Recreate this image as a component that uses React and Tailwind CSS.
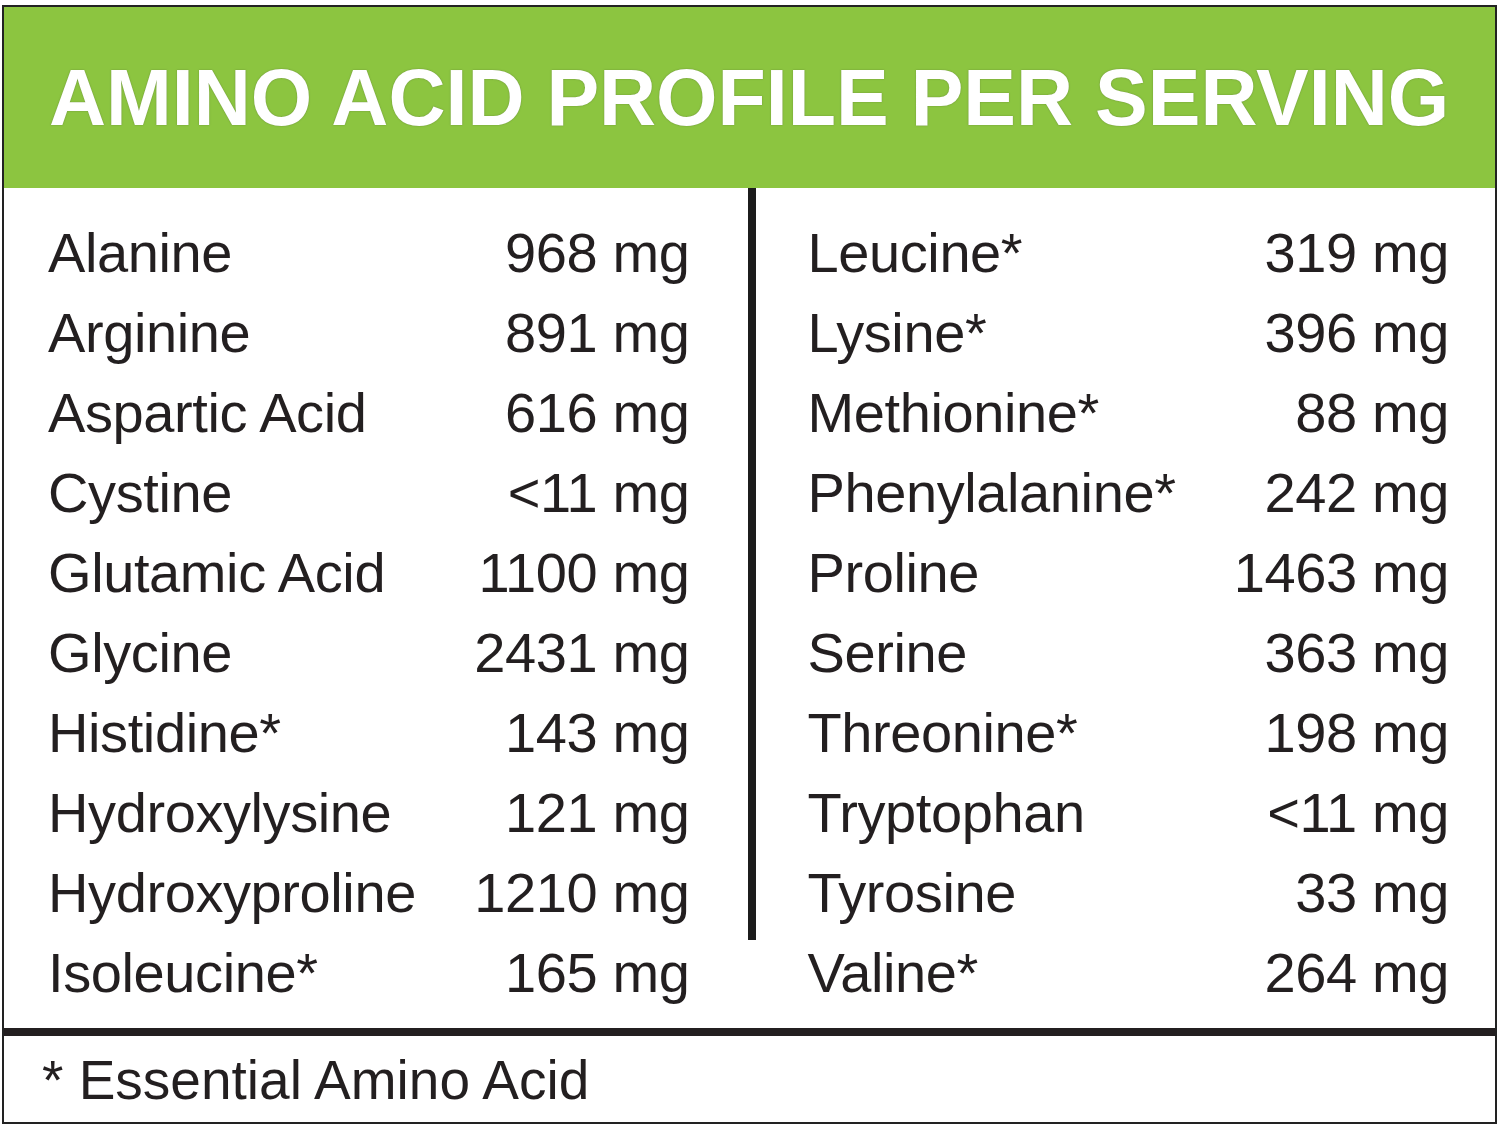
const left = [
  ['Alanine', '968 mg'],
  ['Arginine', '891 mg'],
  ['Aspartic Acid', '616 mg'],
  ['Cystine', '<11 mg'],
  ['Glutamic Acid', '1100 mg'],
  ['Glycine', '2431 mg'],
  ['Histidine*', '143 mg'],
  ['Hydroxylysine', '121 mg'],
  ['Hydroxyproline', '1210 mg'],
  ['Isoleucine*', '165 mg'],
];

const right = [
  ['Leucine*', '319 mg'],
  ['Lysine*', '396 mg'],
  ['Methionine*', '88 mg'],
  ['Phenylalanine*', '242 mg'],
  ['Proline', '1463 mg'],
  ['Serine', '363 mg'],
  ['Threonine*', '198 mg'],
  ['Tryptophan', '<11 mg'],
  ['Tyrosine', '33 mg'],
  ['Valine*', '264 mg'],
];

function Column({ rows, className }) {
  return (
    <div className={`flex flex-1 flex-col ${className}`}>
      {rows.map(([name, amount]) => (
        <div key={name} className="flex h-[80px] items-center justify-between leading-[80px]">
          <span>{name}</span>
          <span>{amount}</span>
        </div>
      ))}
    </div>
  );
}

export default function App() {
  return (
    <div className="min-h-screen bg-white pl-[2px] pt-[5px] font-['Liberation_Sans',Arial,sans-serif] text-[#231f20]">
      <div className="flex h-[1119px] w-[1495px] flex-col border-2 border-[#222]">
        <div className="flex h-[181px] items-center bg-[#8cc540] pl-[45px]">
          <h1 className="text-[79px] font-bold leading-[79px] text-white [text-shadow:0_0_1.5px_#5f7f35]">
            AMINO ACID PROFILE PER SERVING
          </h1>
        </div>

        <div className="flex text-[56px] tracking-[-0.4px]">
          <Column rows={left} className="pb-[15px] pl-[44px] pr-[58px] pt-[25px]" />
          <div className="h-[752px] w-[8px] bg-[#1c1c1c]" />
          <Column rows={right} className="pb-[15px] pl-[52px] pr-[46px] pt-[25px]" />
        </div>

        <div className="h-[8px] bg-[#231f20]" />

        <div className="flex-1 pl-[38px] pt-[4px] text-[55px] leading-[80px]">* Essential Amino Acid</div>
      </div>
    </div>
  );
}
